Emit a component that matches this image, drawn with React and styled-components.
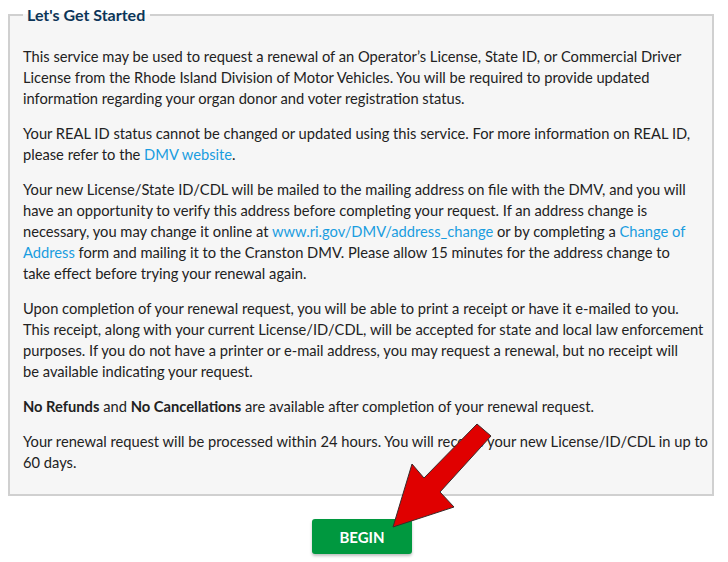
import styled, { createGlobalStyle } from "styled-components";

const GlobalStyle = createGlobalStyle`
    body {
        margin: 0;
        background: #fff;
        font-family: Lato, "Liberation Sans", sans-serif;
    }
`;

const Page = styled.div`
    position: relative;
    width: 728px;
    height: 562px;
    padding: 5px 0 0 8px;
    box-sizing: border-box;
`;

const Box = styled.fieldset`
    width: 706px;
    min-width: 0;
    box-sizing: border-box;
    margin: 0;
    padding: 21px 13px 7px;
    border: 2px solid #d0d0d0;
    background: #f6f6f6;
`;

const Legend = styled.legend`
    padding: 0 5px 0 4px;
    font-size: 16px;
    line-height: 20px;
    font-weight: 700;
    color: #0c3558;
`;

// line breaks follow the reference, so no automatic wrapping
const Para = styled.p`
    margin: 0 0 14px;
    font-size: 14.7px;
    line-height: 21px;
    color: #222;
    white-space: nowrap;

    b {
        font-weight: 700;
    }
`;

const Link = styled.a`
    color: #1a9de0;
    text-decoration: none;
`;

const Actions = styled.div`
    width: 708px;
    display: flex;
    justify-content: center;
    padding-top: 23px;
`;

const BeginButton = styled.button`
    width: 100px;
    height: 35px;
    border: none;
    border-radius: 3px;
    background: #00983f;
    color: #fff;
    font-family: Lato, "Liberation Sans", sans-serif;
    font-size: 15px;
    font-weight: 700;
    box-shadow: 0 2px 3px rgba(0, 0, 0, 0.25);
    cursor: pointer;
`;

const Arrow = styled.svg`
    position: absolute;
    left: 0;
    top: 0;
    pointer-events: none;
`;

export default function App() {
    return (
        <>
            <GlobalStyle />
            <Page>
                <Box>
                    <Legend>Let's Get Started</Legend>
                    <Para>
                        This service may be used to request a renewal of an Operator’s License, State ID, or Commercial Driver<br />
                        License from the Rhode Island Division of Motor Vehicles. You will be required to provide updated<br />
                        information regarding your organ donor and voter registration status.
                    </Para>
                    <Para>
                        Your REAL ID status cannot be changed or updated using this service. For more information on REAL ID,<br />
                        please refer to the <Link href="#">DMV website</Link>.
                    </Para>
                    <Para>
                        Your new License/State ID/CDL will be mailed to the mailing address on file with the DMV, and you will<br />
                        have an opportunity to verify this address before completing your request. If an address change is<br />
                        necessary, you may change it online at <Link href="#">www.ri.gov/DMV/address_change</Link> or by completing a <Link href="#">Change of<br />
                        Address</Link> form and mailing it to the Cranston DMV. Please allow 15 minutes for the address change to<br />
                        take effect before trying your renewal again.
                    </Para>
                    <Para>
                        Upon completion of your renewal request, you will be able to print a receipt or have it e-mailed to you.<br />
                        This receipt, along with your current License/ID/CDL, will be accepted for state and local law enforcement<br />
                        purposes. If you do not have a printer or e-mail address, you may request a renewal, but no receipt will<br />
                        be available indicating your request.
                    </Para>
                    <Para>
                        <b>No Refunds</b> and <b>No Cancellations</b> are available after completion of your renewal request.
                    </Para>
                    <Para>
                        Your renewal request will be processed within 24 hours. You will receive your new License/ID/CDL in up to<br />
                        60 days.
                    </Para>
                </Box>
                <Actions>
                    <BeginButton>BEGIN</BeginButton>
                </Actions>
                <Arrow width="728" height="562" viewBox="0 0 728 562">
                    <polygon
                        points="477,424 491,436 440,492 454,507 393,527 412,464 424,478"
                        fill="#e00000"
                        stroke="#3a2a2a"
                        strokeWidth="1"
                        strokeLinejoin="miter"
                    />
                </Arrow>
            </Page>
        </>
    );
}
